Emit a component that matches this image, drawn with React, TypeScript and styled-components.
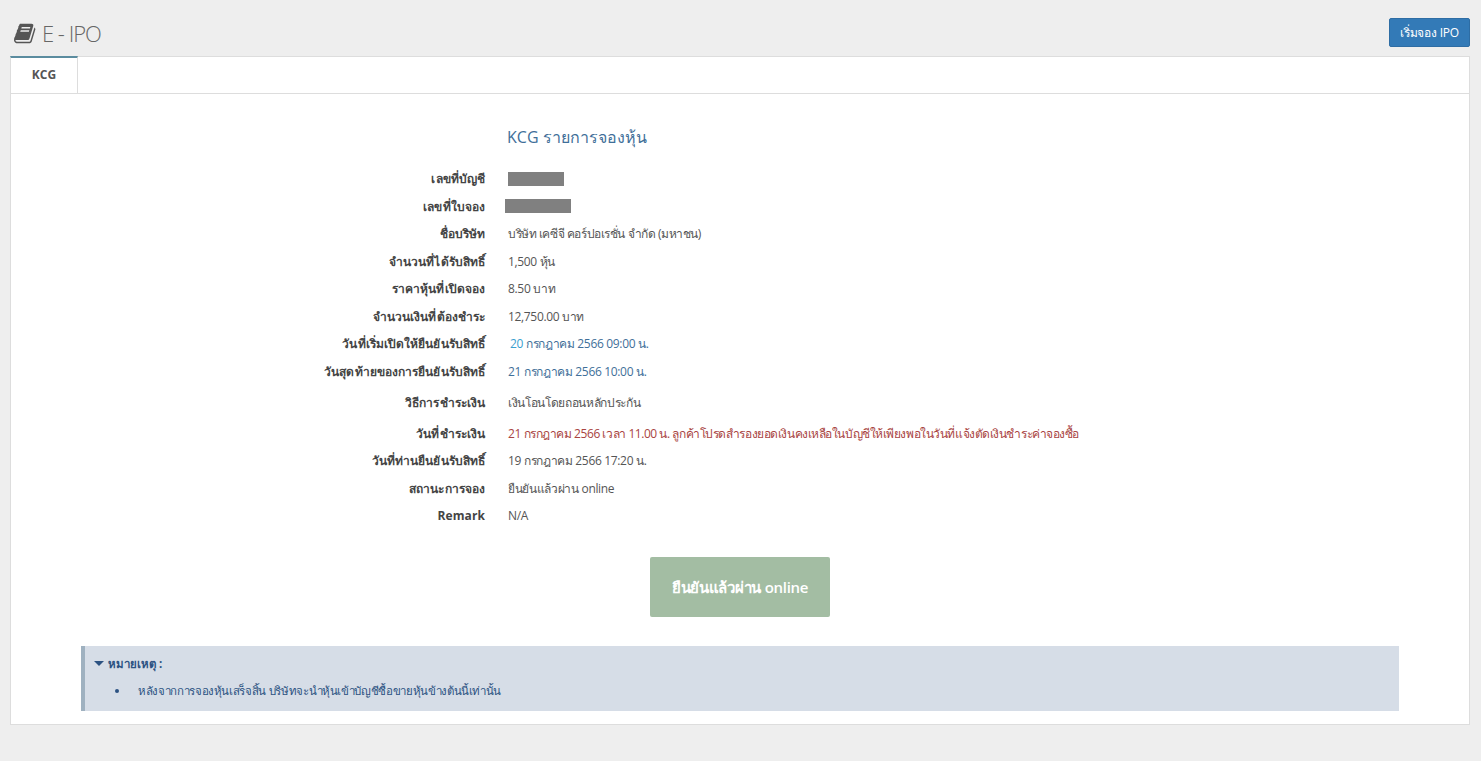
import styled, { createGlobalStyle } from "styled-components";

const GlobalStyle = createGlobalStyle`
  html, body {
    margin: 0;
    padding: 0;
    height: 100%;
    background-color: #eeeeee;
    color: #555555;
    font-family: "Open Sans", "Noto Sans", "DejaVu Sans", sans-serif;
    font-size: 12px;
  }
`;

const Page = styled.div`
  padding: 18px 11px 36px 10px;
  height: 761px;
  box-sizing: border-box;
`;

const TitleBar = styled.div`
  display: flex;
  align-items: center;
  justify-content: space-between;
  height: 29px;
  margin-bottom: 9px;
`;

const PageTitle = styled.h1`
  display: flex;
  align-items: center;
  gap: 5px;
  margin: 2px 0 0 4px;
  font-size: 22px;
  font-weight: 300;
  line-height: 29px;
  letter-spacing: -1px;
  color: #666666;
`;

const StartButton = styled.button`
  width: 81px;
  height: 29px;
  padding: 0;
  border: 1px solid #2e6da4;
  border-radius: 2px;
  background-color: #337ab7;
  color: #ffffff;
  font-family: inherit;
  font-size: 12px;
  letter-spacing: -0.2px;
`;

const Panel = styled.div`
  height: 669px;
  box-sizing: border-box;
  border: 1px solid #dddddd;
  background-color: #ffffff;
`;

const TabBar = styled.div`
  display: flex;
  height: 36px;
  border-bottom: 1px solid #dddddd;
`;

const Tab = styled.div`
  width: 66px;
  height: 35px;
  margin: -1px 0 -1px -1px;
  border-top: 2px solid #5b8c9f;
  border-right: 1px solid #dddddd;
  border-left: 1px solid #dddddd;
  background-color: #ffffff;
  color: #555555;
  font-weight: 700;
  font-size: 12px;
  line-height: 33px;
  text-align: center;
`;

const Content = styled.div`
  padding: 31px 70px 0;
`;

const Heading = styled.h3`
  margin: 0 0 16px 426px;
  font-size: 16px;
  font-weight: 400;
  line-height: 24px;
  color: #3f6f99;
`;

const Row = styled.div<{ $tall?: boolean }>`
  display: grid;
  grid-template-columns: 404px 1fr;
  column-gap: 23px;
  align-items: center;
  height: ${({ $tall }) => ($tall ? "34.5px" : "27.5px")};
`;

const Label = styled.div`
  text-align: right;
  font-weight: 700;
  letter-spacing: 0.08px;
  color: #444444;
`;

const Value = styled.div<{ $tone?: "blue" | "red"; $tight?: boolean }>`
  letter-spacing: ${({ $tight }) => ($tight ? "-0.44px" : "-0.33px")};
  color: ${({ $tone }) =>
    $tone === "blue" ? "#3f6f99" : $tone === "red" ? "#a94442" : "#555555"};
`;

const Highlight = styled.span`
  margin-left: 2px;
  color: #3aa0d0;
`;

const Redacted = styled.div<{ $width: number; $shift: number }>`
  width: ${({ $width }) => $width}px;
  height: 14px;
  margin-left: ${({ $shift }) => $shift}px;
  background-color: #808080;
`;

const ConfirmRow = styled.div`
  display: flex;
  justify-content: center;
  margin-top: 27px;
`;

const ConfirmButton = styled.button`
  width: 180px;
  height: 60px;
  padding: 3px 0 0;
  border: 0;
  border-radius: 2px;
  background-color: #a3bda3;
  color: #ffffff;
  font-family: inherit;
  font-size: 15px;
  font-weight: 600;
  letter-spacing: -0.28px;
`;

const Note = styled.div`
  height: 65px;
  box-sizing: border-box;
  margin-top: 29px;
  padding: 9px 9px 0;
  border-left: 4px solid #9fb1c0;
  background-color: #d6dde7;
  color: #2c5282;
  font-size: 11.5px;
`;

const NoteTitle = styled.div`
  display: flex;
  align-items: center;
  gap: 4px;
  height: 18px;
  font-weight: 700;
`;

const Caret = styled.span`
  width: 0;
  height: 0;
  border-top: 5px solid #2c5282;
  border-right: 5px solid transparent;
  border-left: 5px solid transparent;
`;

const NoteList = styled.ul`
  margin: 9px 0 0;
  padding: 0 0 0 21px;
  list-style: none;
  line-height: 18px;
`;

const NoteItem = styled.li`
  display: flex;
  align-items: center;
  letter-spacing: -0.35px;

  &::before {
    content: "";
    width: 4px;
    height: 4px;
    margin-right: 19px;
    border-radius: 50%;
    background-color: #2c5282;
  }
`;

function BookIcon() {
  return (
    <svg width="23" height="23" viewBox="0 0 1792 1792" fill="#555555">
      <path d="M1639 478q40 57 18 129l-275 906q-19 64-76.5 107.5t-122.5 43.5h-923q-77 0-148.5-53.5t-99.5-131.5q-24-67-2-127 0-4 3-27t4-37q1-8-3-21.5t-3-19.5q2-11 8-21t16.5-23.5 16.5-23.5q23-38 45-91.5t30-91.5q3-10 .5-30t-.5-28q3-11 17-28t17-23q21-36 42-92t25-90q1-9-2.5-32t.5-28q4-13 22-30.5t22-22.5q19-26 42.5-84.5t27.5-96.5q1-8-3-25.5t-2-26.5q2-8 9-18t18-23 17-21q8-12 16.5-30.5t15-35 16-36 19.5-32 26.5-23.5 36-11.5 47.5 5.5l-1 3q38-9 51-9h761q74 0 114 56t18 130l-274 906q-36 119-71.5 153.5t-128.5 34.5h-869q-27 0-38 15-11 16-1 43 24 70 144 70h923q29 0 56-15.5t35-41.5l300-987q7-22 5-57 38 15 59 43zm-1064 2q-4 13 2 22.5t20 9.5h608q13 0 25.5-9.5t16.5-22.5l21-64q4-13-2-22.5t-20-9.5h-608q-13 0-25.5 9.5t-16.5 22.5zm-83 256q-4 13 2 22.5t20 9.5h608q13 0 25.5-9.5t16.5-22.5l21-64q4-13-2-22.5t-20-9.5h-608q-13 0-25.5 9.5t-16.5 22.5z" />
    </svg>
  );
}

export default function App() {
  return (
    <Page>
      <GlobalStyle />
      <TitleBar>
        <PageTitle>
          <BookIcon />
          E - IPO
        </PageTitle>
        <StartButton>เริ่มจอง IPO</StartButton>
      </TitleBar>
      <Panel>
        <TabBar>
          <Tab>KCG</Tab>
        </TabBar>
        <Content>
          <Heading>KCG รายการจองหุ้น</Heading>
          <Row>
            <Label>เลขที่บัญชี</Label>
            <Redacted $width={56} $shift={0} />
          </Row>
          <Row>
            <Label>เลขที่ใบจอง</Label>
            <Redacted $width={66} $shift={-3} />
          </Row>
          <Row>
            <Label>ชื่อบริษัท</Label>
            <Value $tight>บริษัท เคซีจี คอร์ปอเรชั่น จำกัด (มหาชน)</Value>
          </Row>
          <Row>
            <Label>จำนวนที่ได้รับสิทธิ์</Label>
            <Value>1,500 หุ้น</Value>
          </Row>
          <Row>
            <Label>ราคาหุ้นที่เปิดจอง</Label>
            <Value>8.50 บาท</Value>
          </Row>
          <Row>
            <Label>จำนวนเงินที่ต้องชำระ</Label>
            <Value>12,750.00 บาท</Value>
          </Row>
          <Row>
            <Label>วันที่เริ่มเปิดให้ยืนยันรับสิทธิ์</Label>
            <Value $tone="blue">
              <Highlight>20</Highlight> กรกฎาคม 2566 09:00 น.
            </Value>
          </Row>
          <Row>
            <Label>วันสุดท้ายของการยืนยันรับสิทธิ์</Label>
            <Value $tone="blue">21 กรกฎาคม 2566 10:00 น.</Value>
          </Row>
          <Row $tall>
            <Label>วิธีการชำระเงิน</Label>
            <Value>เงินโอนโดยถอนหลักประกัน</Value>
          </Row>
          <Row>
            <Label>วันที่ชำระเงิน</Label>
            <Value $tone="red" $tight>
              21 กรกฎาคม 2566 เวลา 11.00 น. ลูกค้าโปรดสำรองยอดเงินคงเหลือในบัญชีให้เพียงพอในวันที่แจ้งตัดเงินชำระค่าจองซื้อ
            </Value>
          </Row>
          <Row>
            <Label>วันที่ท่านยืนยันรับสิทธิ์</Label>
            <Value>19 กรกฎาคม 2566 17:20 น.</Value>
          </Row>
          <Row>
            <Label>สถานะการจอง</Label>
            <Value>ยืนยันแล้วผ่าน online</Value>
          </Row>
          <Row>
            <Label>Remark</Label>
            <Value>N/A</Value>
          </Row>
          <ConfirmRow>
            <ConfirmButton>ยืนยันแล้วผ่าน online</ConfirmButton>
          </ConfirmRow>
          <Note>
            <NoteTitle>
              <Caret />
              หมายเหตุ :
            </NoteTitle>
            <NoteList>
              <NoteItem>หลังจากการจองหุ้นเสร็จสิ้น บริษัทจะนำหุ้นเข้าบัญชีซื้อขายหุ้นข้างต้นนี้เท่านั้น</NoteItem>
            </NoteList>
          </Note>
        </Content>
      </Panel>
    </Page>
  );
}
